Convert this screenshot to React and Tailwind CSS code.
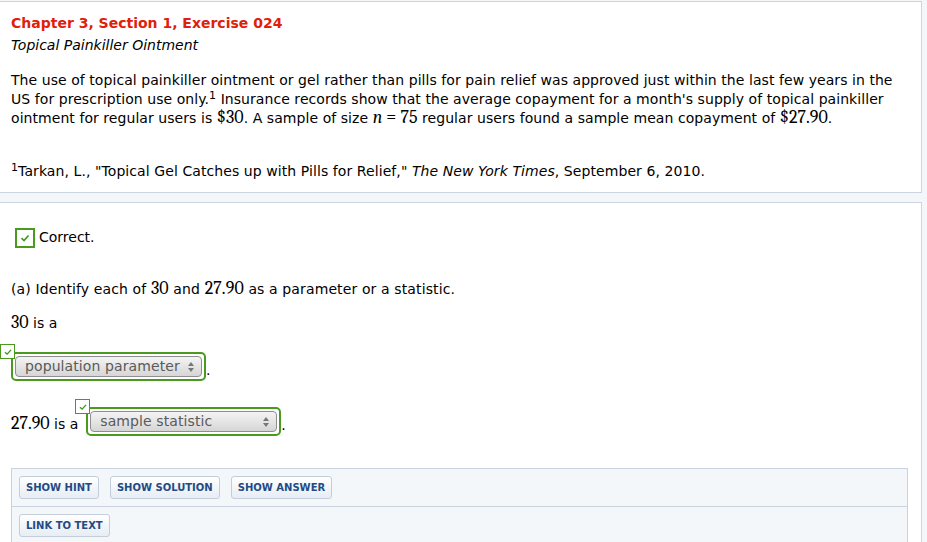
import React from 'react';

const Check = ({ size = 14, className = '' }) => (
  <svg width={size} height={size} viewBox="0 0 14 14" className={className}>
    <path d="M3.5 7.2 L6 9.5 L10.5 4.5" fill="none" stroke="#3a9a1a" strokeWidth="1.6" />
  </svg>
);

const Arrows = () => (
  <svg width="8" height="12" viewBox="0 0 8 12">
    <path d="M4 1 L7 5 L1 5 Z" fill="#777" />
    <path d="M4 11 L7 7 L1 7 Z" fill="#777" />
  </svg>
);

const Dropdown = ({ label, width }) => (
  <span className="relative inline-block">
    <span className="absolute -left-[11px] -top-[8px] w-[15px] h-[15px] bg-white border border-[#4a9a1f] flex items-center justify-center">
      <Check size={12} />
    </span>
    <span
      className="inline-flex rounded-[5px] border-[2px] border-[#4a9a1f] p-[2px]"
      style={{ width }}
    >
      <span className="flex-1 flex items-center justify-between h-[21px] rounded-[4px] border border-[#8e8e8e] bg-gradient-to-b from-[#f4f4f4] to-[#d6d6d6] pl-[9px] pr-[6px] text-[#5a5a5a] text-[14px] tracking-[0.1px]">
        {label}
        <Arrows />
      </span>
    </span>
  </span>
);

const Btn = ({ children }) => (
  <button className="h-[23px] px-[6px] rounded-[3px] border border-[#c3ceda] bg-gradient-to-b from-white to-[#e6edf4] text-[10px] font-bold text-[#234a86]">
    {children}
  </button>
);

const M = ({ children }) => (
  <span className="font-serif text-[18px] leading-none">{children}</span>
);

export default function App() {
  return (
    <div className="min-h-[542px] bg-[#f3f7fa] font-[DejaVu_Sans,Verdana,sans-serif] text-[14px] text-black pt-px">
      <div className="w-[922px] bg-white border border-l-0 border-[#cdd6df] pl-[11px] pr-[10px] pt-[10px] pb-[11px]">
        <div className="leading-[22px] text-[14px] font-bold text-[#e0200a]">Chapter 3, Section 1, Exercise 024</div>
        <div className="leading-[22px] italic">Topical Painkiller Ointment</div>
        <p className="mt-[15px] leading-[19px] tracking-[0.06px]">
          The use of topical painkiller ointment or gel rather than pills for pain relief was approved just within the last few years in the<br />
          US for prescription use only.<sup className="text-[11px]">1</sup> Insurance records show that the average copayment for a month's supply of topical painkiller<br />
          ointment for regular users is <M>$30</M>. A sample of size <M><i>n</i> = 75</M> regular users found a sample mean copayment of <M>$27.90</M>.
        </p>
        <p className="mt-[34px] leading-[19px] tracking-[0.08px]">
          <sup className="text-[11px]">1</sup>Tarkan, L., "Topical Gel Catches up with Pills for Relief," <i>The New York Times</i>, September 6, 2010.
        </p>
      </div>

      <div className="mt-[9px] w-[922px] min-h-[341px] bg-white border border-l-0 border-b-0 border-[#cdd6df] pl-[11px] pr-[12px] pt-[24px]">
        <div className="flex items-center gap-[4px] pl-[4px]">
          <span className="w-[20px] h-[20px] border-[2px] border-[#4a9a1f] flex items-center justify-center">
            <Check size={14} />
          </span>
          <span>Correct.</span>
        </div>

        <div className="mt-[31px] leading-[20px] tracking-[0.12px]">
          (a) Identify each of <M>30</M> and <M>27.90</M> as a parameter or a statistic.
        </div>
        <div className="mt-[14px] leading-[20px]">
          <M>30</M> is a
        </div>
        <div className="mt-[19px] flex items-end">
          <Dropdown label="population parameter" width="195px" />
          <span>.</span>
        </div>
        <div className="mt-[26px] flex items-end">
          <span className="mr-[8px] mb-[1px]"><M>27.90</M> is a</span>
          <Dropdown label="sample statistic" width="195px" />
          <span>.</span>
        </div>

        <div className="mt-[32px] w-[897px] bg-[#f3f7fa] border border-b-0 border-[#c8d3de]">
          <div className="flex gap-[11px] px-[7px] py-[7px] border-b border-[#c8d3de]">
            <Btn>SHOW HINT</Btn>
            <Btn>SHOW SOLUTION</Btn>
            <Btn>SHOW ANSWER</Btn>
          </div>
          <div className="px-[7px] py-[7px]">
            <Btn>LINK TO TEXT</Btn>
          </div>
        </div>
      </div>
    </div>
  );
}
